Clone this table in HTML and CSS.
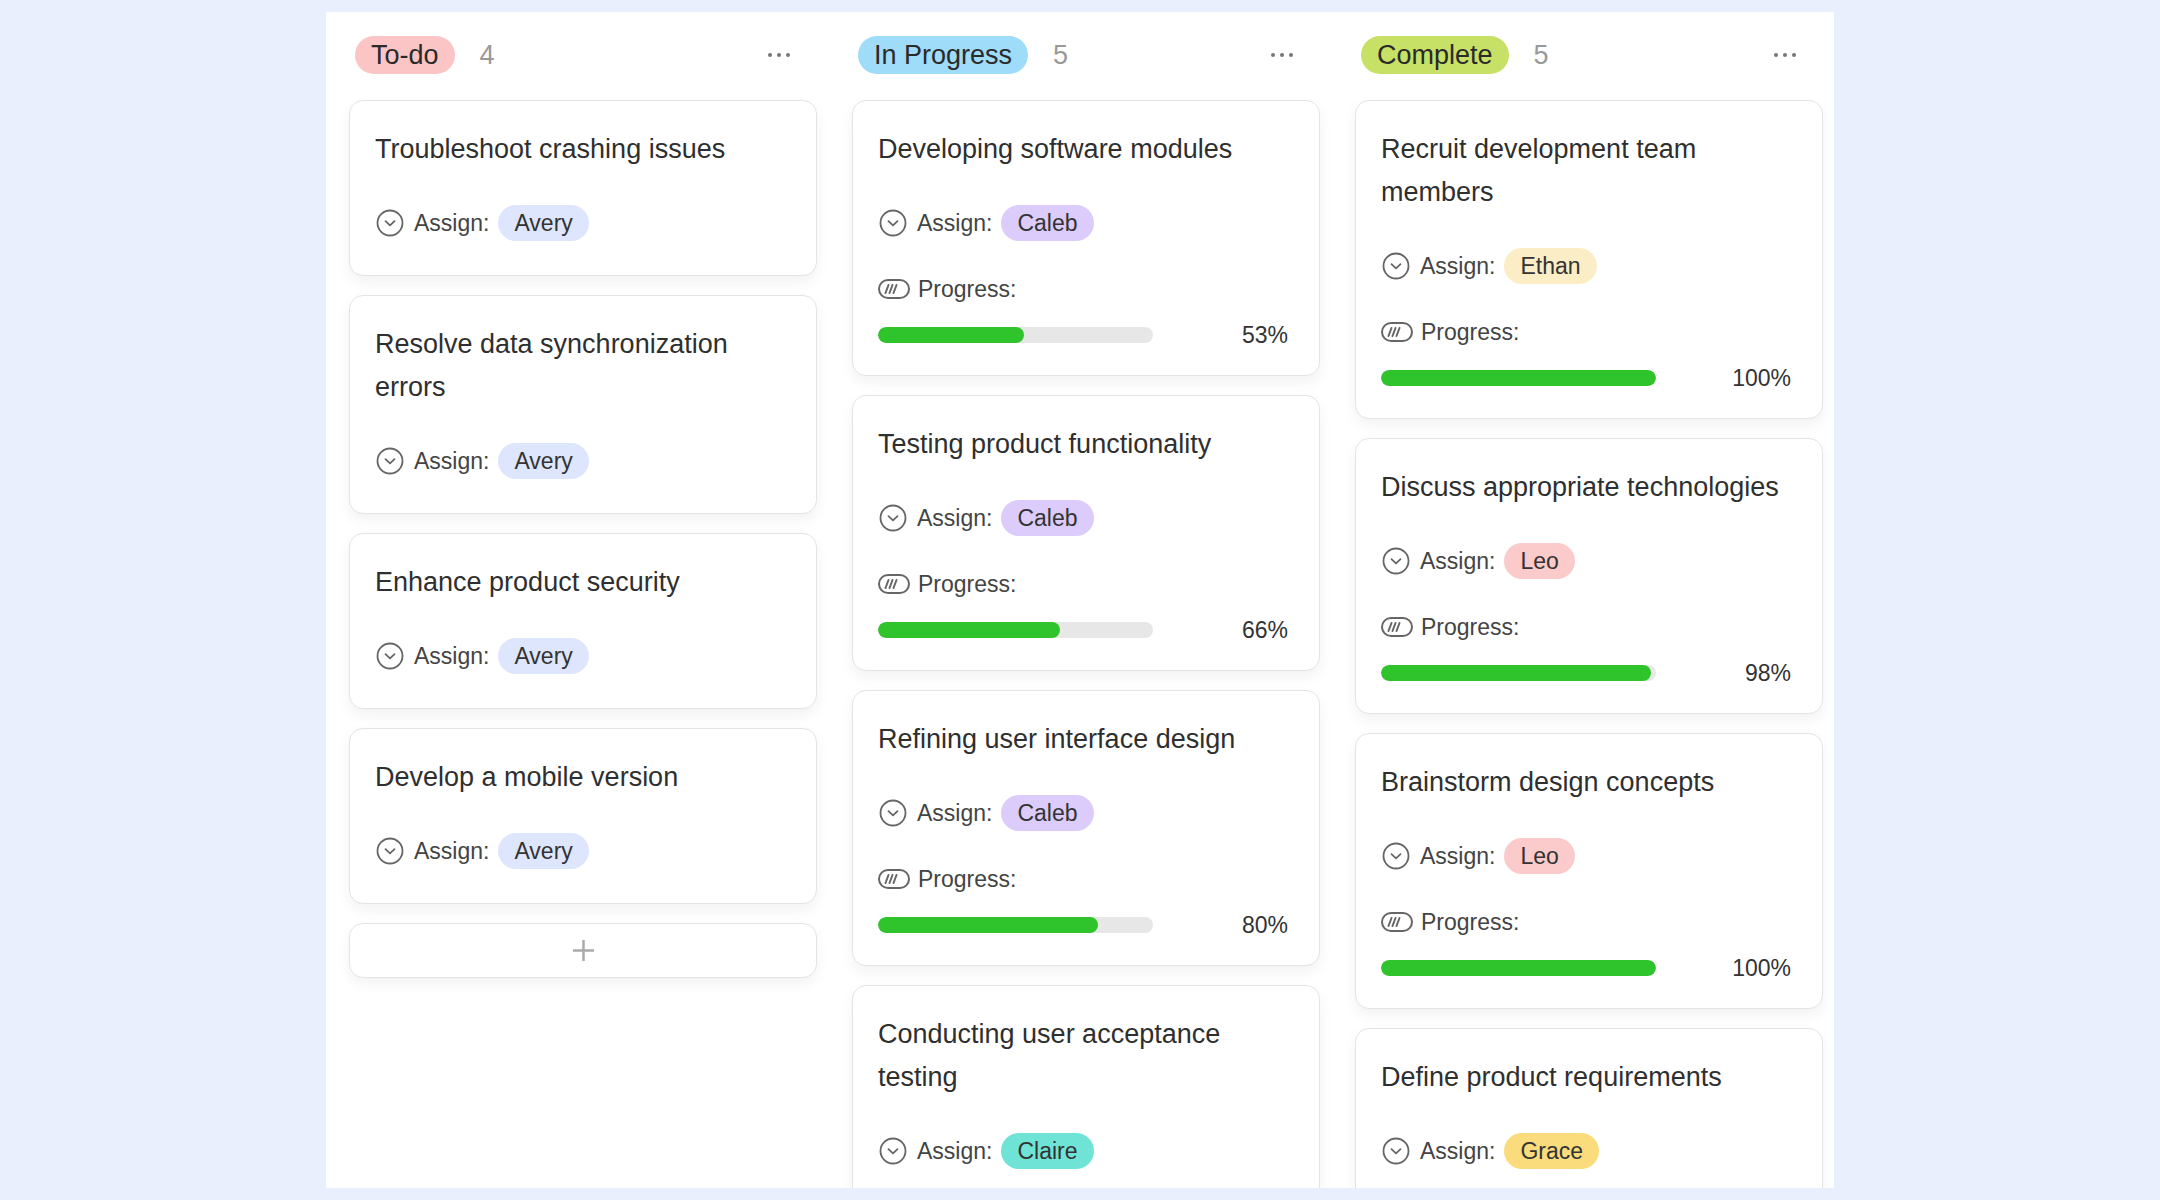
FILE: index.html
```html
<!DOCTYPE html>
<html lang="en">
<head>
<meta charset="utf-8">
<title>Board</title>
<link rel="stylesheet" href="styles.css">
</head>
<body>
<div class="board">

  <section class="column">
    <header class="col-head">
      <span class="status todo">To-do</span>
      <span class="count">4</span>
      <span class="more"><i></i><i></i><i></i></span>
    </header>
    <div class="cards">
      <article class="card">
        <h3 class="title">Troubleshoot crashing issues</h3>
        <div class="assign">
          <svg class="ico-assign" viewBox="0 0 28 28"><circle cx="14" cy="14" r="12.5"/><path d="M9.5 12.2 L14 16.4 L18.5 12.2"/></svg>
          <span class="label">Assign:</span><span class="person avery">Avery</span>
        </div>
      </article>
      <article class="card">
        <h3 class="title">Resolve data synchronization errors</h3>
        <div class="assign">
          <svg class="ico-assign" viewBox="0 0 28 28"><circle cx="14" cy="14" r="12.5"/><path d="M9.5 12.2 L14 16.4 L18.5 12.2"/></svg>
          <span class="label">Assign:</span><span class="person avery">Avery</span>
        </div>
      </article>
      <article class="card">
        <h3 class="title">Enhance product security</h3>
        <div class="assign">
          <svg class="ico-assign" viewBox="0 0 28 28"><circle cx="14" cy="14" r="12.5"/><path d="M9.5 12.2 L14 16.4 L18.5 12.2"/></svg>
          <span class="label">Assign:</span><span class="person avery">Avery</span>
        </div>
      </article>
      <article class="card">
        <h3 class="title">Develop a mobile version</h3>
        <div class="assign">
          <svg class="ico-assign" viewBox="0 0 28 28"><circle cx="14" cy="14" r="12.5"/><path d="M9.5 12.2 L14 16.4 L18.5 12.2"/></svg>
          <span class="label">Assign:</span><span class="person avery">Avery</span>
        </div>
      </article>
      <button class="add" type="button" aria-label="Add">
        <svg viewBox="0 0 24 24"><path d="M12 1 V23 M1 12 H23"/></svg>
      </button>
    </div>
  </section>

  <section class="column">
    <header class="col-head">
      <span class="status progress">In Progress</span>
      <span class="count">5</span>
      <span class="more"><i></i><i></i><i></i></span>
    </header>
    <div class="cards">
      <article class="card">
        <h3 class="title">Developing software modules</h3>
        <div class="assign">
          <svg class="ico-assign" viewBox="0 0 28 28"><circle cx="14" cy="14" r="12.5"/><path d="M9.5 12.2 L14 16.4 L18.5 12.2"/></svg>
          <span class="label">Assign:</span><span class="person caleb">Caleb</span>
        </div>
        <div class="prog-label">
          <svg class="ico-prog" viewBox="0 0 32 20"><rect x="1" y="1" width="30" height="18" rx="9"/><path d="M7.5 14 L10.5 6 M11.5 14 L14.5 6 M15.5 14 L18.5 6"/></svg>
          <span class="label">Progress:</span>
        </div>
        <div class="bar-row">
          <div class="bar"><div class="fill" style="width:53%"></div></div>
          <span class="pct">53%</span>
        </div>
      </article>
      <article class="card">
        <h3 class="title">Testing product functionality</h3>
        <div class="assign">
          <svg class="ico-assign" viewBox="0 0 28 28"><circle cx="14" cy="14" r="12.5"/><path d="M9.5 12.2 L14 16.4 L18.5 12.2"/></svg>
          <span class="label">Assign:</span><span class="person caleb">Caleb</span>
        </div>
        <div class="prog-label">
          <svg class="ico-prog" viewBox="0 0 32 20"><rect x="1" y="1" width="30" height="18" rx="9"/><path d="M7.5 14 L10.5 6 M11.5 14 L14.5 6 M15.5 14 L18.5 6"/></svg>
          <span class="label">Progress:</span>
        </div>
        <div class="bar-row">
          <div class="bar"><div class="fill" style="width:66%"></div></div>
          <span class="pct">66%</span>
        </div>
      </article>
      <article class="card">
        <h3 class="title">Refining user interface design</h3>
        <div class="assign">
          <svg class="ico-assign" viewBox="0 0 28 28"><circle cx="14" cy="14" r="12.5"/><path d="M9.5 12.2 L14 16.4 L18.5 12.2"/></svg>
          <span class="label">Assign:</span><span class="person caleb">Caleb</span>
        </div>
        <div class="prog-label">
          <svg class="ico-prog" viewBox="0 0 32 20"><rect x="1" y="1" width="30" height="18" rx="9"/><path d="M7.5 14 L10.5 6 M11.5 14 L14.5 6 M15.5 14 L18.5 6"/></svg>
          <span class="label">Progress:</span>
        </div>
        <div class="bar-row">
          <div class="bar"><div class="fill" style="width:80%"></div></div>
          <span class="pct">80%</span>
        </div>
      </article>
      <article class="card">
        <h3 class="title">Conducting user acceptance testing</h3>
        <div class="assign">
          <svg class="ico-assign" viewBox="0 0 28 28"><circle cx="14" cy="14" r="12.5"/><path d="M9.5 12.2 L14 16.4 L18.5 12.2"/></svg>
          <span class="label">Assign:</span><span class="person claire">Claire</span>
        </div>
        <div class="prog-label">
          <svg class="ico-prog" viewBox="0 0 32 20"><rect x="1" y="1" width="30" height="18" rx="9"/><path d="M7.5 14 L10.5 6 M11.5 14 L14.5 6 M15.5 14 L18.5 6"/></svg>
          <span class="label">Progress:</span>
        </div>
        <div class="bar-row">
          <div class="bar"><div class="fill" style="width:40%"></div></div>
          <span class="pct">40%</span>
        </div>
      </article>
    </div>
  </section>

  <section class="column">
    <header class="col-head">
      <span class="status complete">Complete</span>
      <span class="count">5</span>
      <span class="more"><i></i><i></i><i></i></span>
    </header>
    <div class="cards">
      <article class="card">
        <h3 class="title">Recruit development team members</h3>
        <div class="assign">
          <svg class="ico-assign" viewBox="0 0 28 28"><circle cx="14" cy="14" r="12.5"/><path d="M9.5 12.2 L14 16.4 L18.5 12.2"/></svg>
          <span class="label">Assign:</span><span class="person ethan">Ethan</span>
        </div>
        <div class="prog-label">
          <svg class="ico-prog" viewBox="0 0 32 20"><rect x="1" y="1" width="30" height="18" rx="9"/><path d="M7.5 14 L10.5 6 M11.5 14 L14.5 6 M15.5 14 L18.5 6"/></svg>
          <span class="label">Progress:</span>
        </div>
        <div class="bar-row">
          <div class="bar"><div class="fill" style="width:100%"></div></div>
          <span class="pct">100%</span>
        </div>
      </article>
      <article class="card">
        <h3 class="title">Discuss appropriate technologies</h3>
        <div class="assign">
          <svg class="ico-assign" viewBox="0 0 28 28"><circle cx="14" cy="14" r="12.5"/><path d="M9.5 12.2 L14 16.4 L18.5 12.2"/></svg>
          <span class="label">Assign:</span><span class="person leo">Leo</span>
        </div>
        <div class="prog-label">
          <svg class="ico-prog" viewBox="0 0 32 20"><rect x="1" y="1" width="30" height="18" rx="9"/><path d="M7.5 14 L10.5 6 M11.5 14 L14.5 6 M15.5 14 L18.5 6"/></svg>
          <span class="label">Progress:</span>
        </div>
        <div class="bar-row">
          <div class="bar"><div class="fill" style="width:98%"></div></div>
          <span class="pct">98%</span>
        </div>
      </article>
      <article class="card">
        <h3 class="title">Brainstorm design concepts</h3>
        <div class="assign">
          <svg class="ico-assign" viewBox="0 0 28 28"><circle cx="14" cy="14" r="12.5"/><path d="M9.5 12.2 L14 16.4 L18.5 12.2"/></svg>
          <span class="label">Assign:</span><span class="person leo">Leo</span>
        </div>
        <div class="prog-label">
          <svg class="ico-prog" viewBox="0 0 32 20"><rect x="1" y="1" width="30" height="18" rx="9"/><path d="M7.5 14 L10.5 6 M11.5 14 L14.5 6 M15.5 14 L18.5 6"/></svg>
          <span class="label">Progress:</span>
        </div>
        <div class="bar-row">
          <div class="bar"><div class="fill" style="width:100%"></div></div>
          <span class="pct">100%</span>
        </div>
      </article>
      <article class="card">
        <h3 class="title">Define product requirements</h3>
        <div class="assign">
          <svg class="ico-assign" viewBox="0 0 28 28"><circle cx="14" cy="14" r="12.5"/><path d="M9.5 12.2 L14 16.4 L18.5 12.2"/></svg>
          <span class="label">Assign:</span><span class="person grace">Grace</span>
        </div>
        <div class="prog-label">
          <svg class="ico-prog" viewBox="0 0 32 20"><rect x="1" y="1" width="30" height="18" rx="9"/><path d="M7.5 14 L10.5 6 M11.5 14 L14.5 6 M15.5 14 L18.5 6"/></svg>
          <span class="label">Progress:</span>
        </div>
        <div class="bar-row">
          <div class="bar"><div class="fill" style="width:100%"></div></div>
          <span class="pct">100%</span>
        </div>
      </article>
    </div>
  </section>

</div>
</body>
</html>
```

FILE: styles.css
```css
* { box-sizing: border-box; }

html, body {
  margin: 0;
  padding: 0;
  height: 1200px;
  overflow: hidden;
}

body {
  background: #e9effd;
  font-family: "Liberation Sans", Arial, sans-serif;
  color: #333;
}

.board {
  width: 1508px;
  height: 1176px;
  margin: 12px auto 0;
  background: #ffffff;
  padding: 24px 11px 0 23px;
  display: flex;
  gap: 35px;
  overflow: hidden;
}

.column {
  width: 468px;
  flex: none;
  display: flex;
  flex-direction: column;
}

.col-head {
  height: 38px;
  display: flex;
  align-items: center;
  padding: 0 27px 0 6px;
  margin-bottom: 26px;
}

.status {
  height: 38px;
  line-height: 38px;
  padding: 0 16px;
  border-radius: 19px;
  font-size: 27px;
  color: #2a2a2a;
}
.status.todo { background: #fbc5c5; }
.status.progress { background: #9fdcfa; }
.status.complete { background: #c7e167; }

.count {
  margin-left: 25px;
  font-size: 27px;
  color: #999;
}

.more {
  margin-left: auto;
  display: flex;
  gap: 5px;
}
.more i {
  width: 4px;
  height: 4px;
  border-radius: 50%;
  background: #777;
}

.cards {
  display: flex;
  flex-direction: column;
  gap: 19px;
}

.card {
  background: #fff;
  border: 1px solid #e4e4e4;
  border-radius: 14px;
  box-shadow: 0 6px 14px rgba(0, 0, 0, 0.055);
  padding: 27px 30px 32px 25px;
  flex: none;
}

.title {
  margin: 0;
  font-size: 27px;
  line-height: 43px;
  font-weight: normal;
  color: #2f2f2f;
}

.assign {
  margin-top: 34px;
  height: 36px;
  display: flex;
  align-items: center;
}
.assign:last-child { margin-bottom: 2px; }

.ico-assign {
  width: 28px;
  height: 28px;
  margin-left: 1px;
  fill: none;
  stroke: #666;
  stroke-width: 1.8;
  stroke-linecap: round;
  stroke-linejoin: round;
  flex: none;
}

.label {
  font-size: 23px;
  color: #444;
  margin-left: 10px;
}

.person {
  margin-left: 9px;
  height: 36px;
  line-height: 36px;
  padding: 0 16px;
  border-radius: 18px;
  font-size: 23px;
  color: #333;
}
.person.avery { background: #dee6fd; }
.person.caleb { background: #dcccfb; }
.person.ethan { background: #fbedc6; }
.person.leo { background: #fbcaca; }
.person.claire { background: #6fe4d6; }
.person.grace { background: #fadc7d; }

.prog-label {
  margin-top: 36px;
  height: 24px;
  display: flex;
  align-items: center;
}
.prog-label .label { margin-left: 8px; }

.ico-prog {
  width: 32px;
  height: 20px;
  fill: none;
  stroke: #666;
  stroke-width: 2;
  stroke-linecap: round;
  flex: none;
}

.bar-row {
  margin-top: 26px;
  height: 16px;
  display: flex;
  align-items: center;
  justify-content: space-between;
}

.bar {
  width: 275px;
  height: 16px;
  border-radius: 8px;
  background: #e7e7e7;
  overflow: hidden;
}
.fill {
  height: 100%;
  border-radius: 8px;
  background: #2fc42b;
}

.pct {
  font-size: 23px;
  color: #333;
  line-height: 16px;
  margin-right: 1px;
}

.add {
  height: 55px;
  width: 100%;
  background: #fff;
  border: 1px solid #e4e4e4;
  border-radius: 14px;
  box-shadow: 0 6px 14px rgba(0, 0, 0, 0.05);
  display: flex;
  align-items: center;
  justify-content: center;
  padding: 0;
  flex: none;
}
.add svg {
  width: 23px;
  height: 23px;
  fill: none;
  stroke: #aaa;
  stroke-width: 2.6;
}
```
